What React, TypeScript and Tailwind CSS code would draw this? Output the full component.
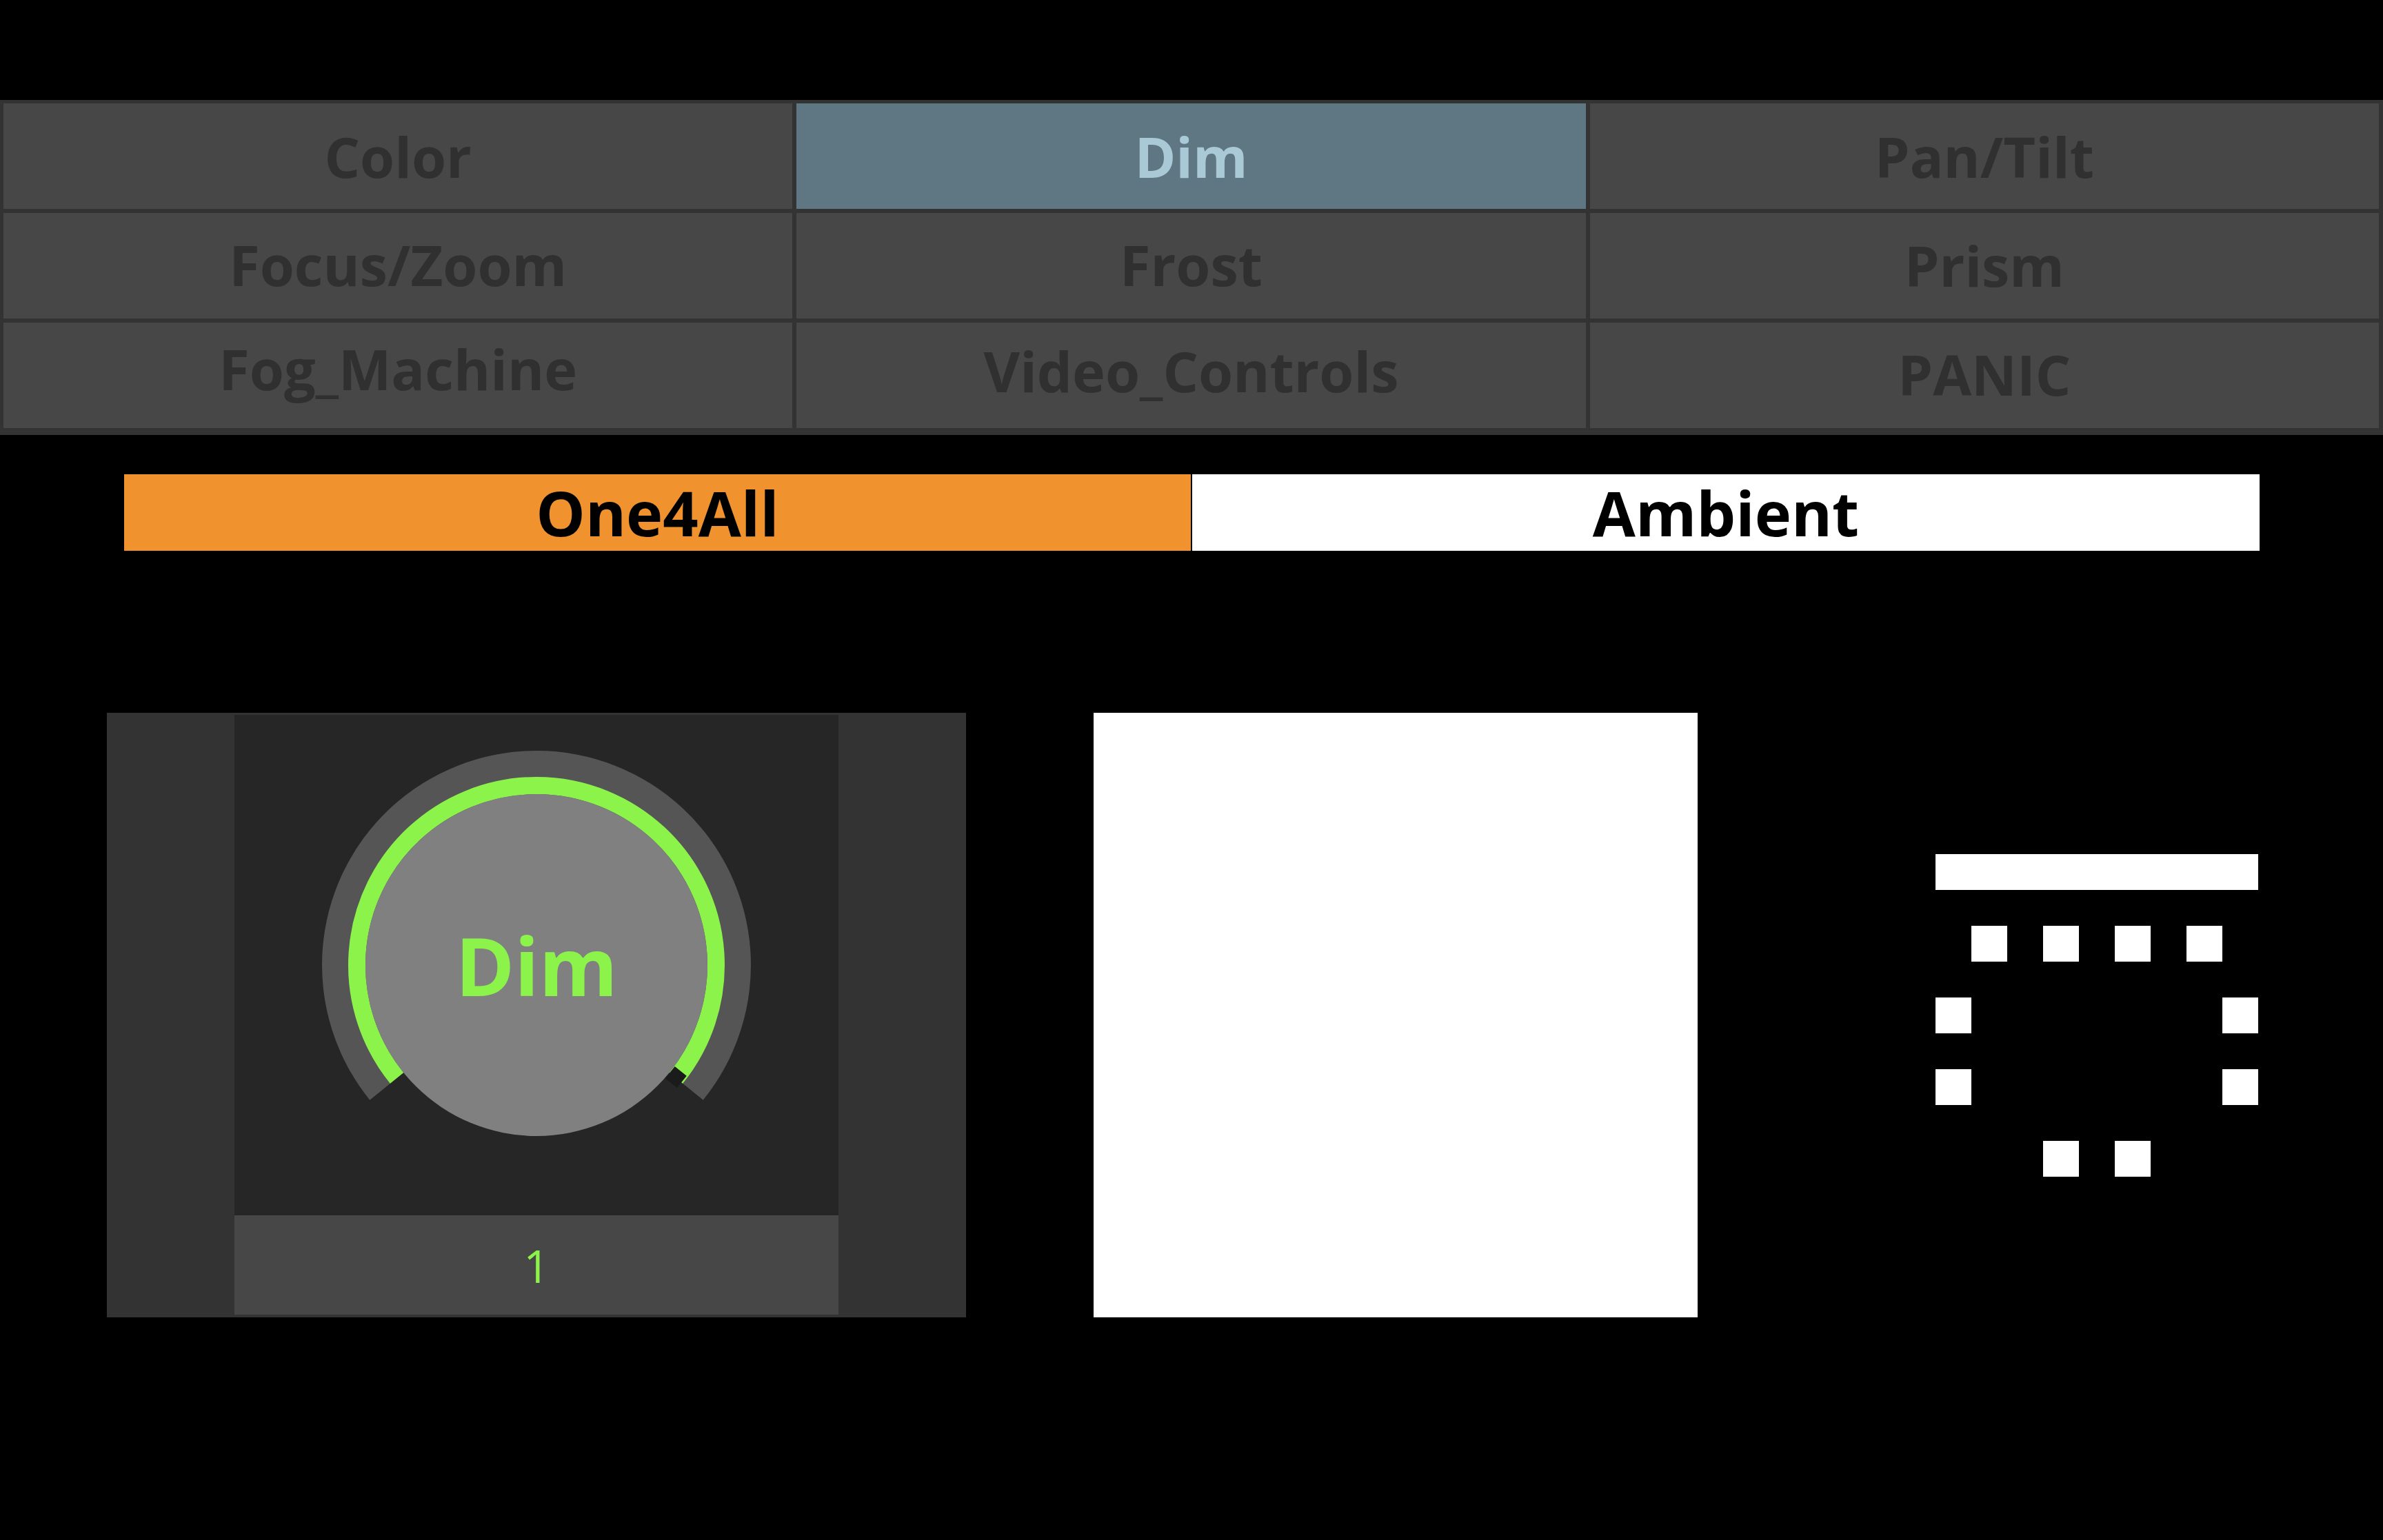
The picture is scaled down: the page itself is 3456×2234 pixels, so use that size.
import React from 'react';

const font = { fontFamily: '"Open Sans", "Noto Sans", sans-serif' };

const tabs = [
  { label: 'Color', active: false, nudge: '' },
  { label: 'Dim', active: true, nudge: '' },
  { label: 'Pan/Tilt', active: false, nudge: '' },
  { label: 'Focus/Zoom', active: false, nudge: 'pb-[4px]' },
  { label: 'Frost', active: false, nudge: 'pb-[4px]' },
  { label: 'Prism', active: false, nudge: 'pb-[2px]' },
  { label: 'Fog_Machine', active: false, nudge: 'pb-[19px]' },
  { label: 'Video_Controls', active: false, nudge: 'pb-[13px]' },
  { label: 'PANIC', active: false, nudge: 'pb-[3px]' },
];

// pixel art: [col, row, width in cells]
const pixels: [number, number, number][] = [
  [0, 0, 9],
  [1, 2, 1],
  [3, 2, 1],
  [5, 2, 1],
  [7, 2, 1],
  [0, 4, 1],
  [8, 4, 1],
  [0, 6, 1],
  [8, 6, 1],
  [3, 8, 1],
  [5, 8, 1],
];

function Knob() {
  const c = 320;
  const a = (51 * Math.PI) / 180;
  const pt = (r: number, side: number) => `${c + side * r * Math.sin(a)} ${c + r * Math.cos(a)}`;
  return (
    <div className="relative flex h-[640px] w-[640px] items-center justify-center">
      <svg width="640" height="640" viewBox="0 0 640 640" className="absolute inset-0">
        <path d={`M ${c} ${c} L ${pt(311, -1)} A 311 311 0 1 1 ${pt(311, 1)} Z`} fill="#555555" />
        <path
          d={`M ${pt(260.5, -1)} A 260.5 260.5 0 1 1 ${pt(260.5, 1)}`}
          fill="none"
          stroke="#8cf34b"
          strokeWidth="25"
        />
        <circle cx={c} cy={c} r="248" fill="#808080" />
        <rect x="-11" y="-11" width="22" height="22" fill="#1b1b1b" transform="translate(522.3 482.5) rotate(39)" />
      </svg>
      <span className="relative text-[116px] font-bold text-[#8cf34b]">Dim</span>
    </div>
  );
}

export default function App() {
  return (
    <div className="min-h-screen bg-black pt-[145px]" style={font}>
      <div className="grid grid-cols-3 gap-x-[6px] gap-y-[6px] bg-[#333333] pt-[5px] pr-[6px] pb-[10px] pl-[5px]">
        {tabs.map((t) => (
          <div
            key={t.label}
            className={`flex h-[153px] items-center justify-center text-[81px] font-bold ${t.nudge} ${
              t.active ? 'bg-[#5e7783] text-[#a9c9d7]' : 'bg-[#474747] text-[#303030]'
            }`}
          >
            {t.label}
          </div>
        ))}
      </div>

      <div className="mt-[57px] flex h-[111px] pl-[180px]">
        <div className="flex w-[1547px] items-center justify-center bg-[#f0932f] text-[90px] font-bold text-black">
          One4All
        </div>
        <div className="ml-[2px] flex w-[1548px] items-center justify-center bg-white text-[90px] font-bold text-black">
          Ambient
        </div>
      </div>

      <div className="mt-[235px] flex items-center pl-[155px]">
        <div className="flex h-[877px] w-[1246px] justify-center bg-[#333333] pt-[3px] pb-[4px]">
          <div className="flex w-[876px] flex-col">
            <div className="flex flex-1 items-center justify-center bg-[#262626]">
              <Knob />
            </div>
            <div className="flex h-[144px] items-center justify-center bg-[#474747] text-[66px] text-[#8cf34b]">
              1
            </div>
          </div>
        </div>

        <div className="ml-[185px] h-[877px] w-[876px] bg-white" />

        <svg width="468" height="468" viewBox="0 0 468 468" className="ml-[345px]">
          {pixels.map(([x, y, w]) => (
            <rect key={`${x}-${y}`} x={x * 52} y={y * 52} width={w * 52} height="52" fill="#ffffff" />
          ))}
        </svg>
      </div>
    </div>
  );
}
